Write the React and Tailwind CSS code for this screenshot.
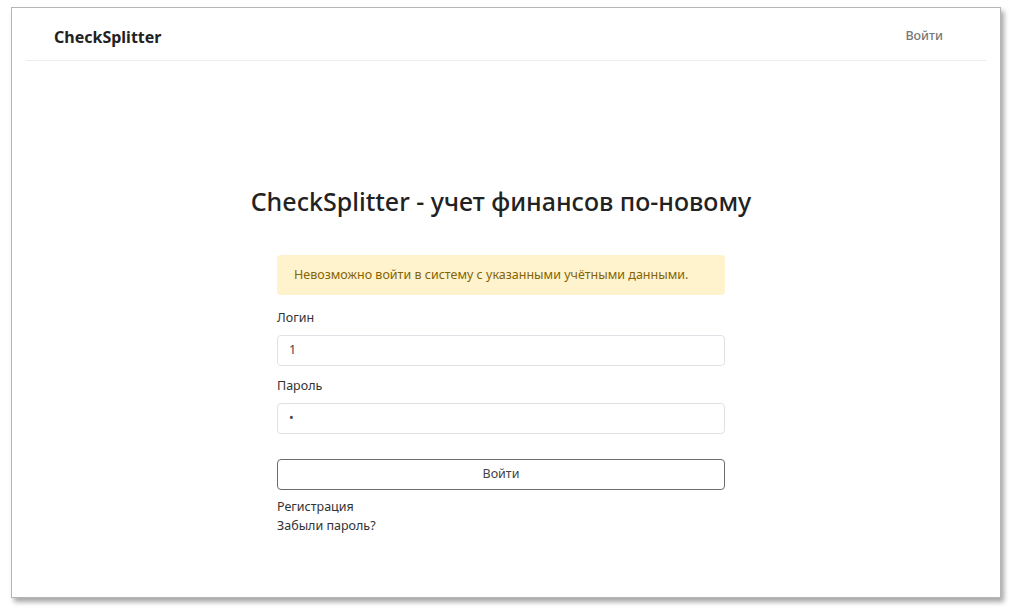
export default function App() {
  const font = { fontFamily: '"Noto Sans", "Open Sans", sans-serif' };
  return (
    <div className="w-[1012px] h-[613px] bg-white overflow-hidden" style={font}>
      <div className="ml-[11px] mt-[7px] w-[990px] h-[591px] bg-white border border-[#b5b5b5] shadow-[3px_4px_5px_rgba(0,0,0,0.35)] flex flex-col">
        <div className="mx-[14px] h-[53px] border-b border-[#ececec] flex items-center justify-between pl-[28px] pr-[43px] pt-[5px]">
          <span className="text-[16px] font-bold text-[#222]">CheckSplitter</span>
          <span className="text-[12.5px] font-medium text-[#777]">Войти</span>
        </div>
        <div className="flex flex-col items-center pt-[124px] pr-[10px]">
          <h1 className="text-[25px] font-medium text-[#222] leading-[32px]">CheckSplitter - учет финансов по-новому</h1>
          <div className="w-[448px] mt-[38px] flex flex-col">
            <div className="h-[40px] rounded-[4px] bg-[#fff3cd] text-[#856404] text-[12.5px] flex items-center pl-[17px]">
              Невозможно войти в систему с указанными учётными данными.
            </div>
            <label className="mt-[14px] text-[12.5px] text-[#333] leading-[18px]">Логин</label>
            <div className="mt-[8px] h-[31px] border border-[#dee2e6] rounded-[4px] flex items-center pl-[11px] text-[12.5px] text-[#444]">1</div>
            <label className="mt-[11px] text-[12.5px] text-[#333] leading-[18px]">Пароль</label>
            <div className="mt-[8px] h-[31px] border border-[#dee2e6] rounded-[4px] flex items-center pl-[11px] text-[12.5px] text-[#444]">•</div>
            <button className="mt-[25px] h-[31px] border border-[#6c6c6c] rounded-[4px] text-[12.5px] text-[#444] bg-white">Войти</button>
            <a className="mt-[8px] text-[12.5px] text-[#333] leading-[18px]">Регистрация</a>
            <a className="mt-[1px] text-[12.5px] text-[#333] leading-[18px]">Забыли пароль?</a>
          </div>
        </div>
      </div>
    </div>
  );
}
